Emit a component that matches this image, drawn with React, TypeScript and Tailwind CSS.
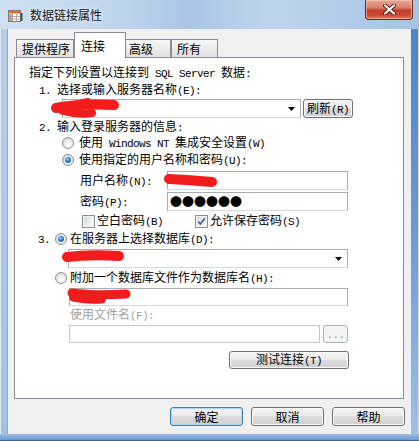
import React from "react";

const CJK = "font-['Noto_Sans_CJK_SC',sans-serif]";
const BTN_GRAD = "bg-[linear-gradient(#f2f2f2_0%,#ebebeb_50%,#dddddd_50%,#cfcfcf_100%)]";

function T({ s }: { s: string }) {
  const parts = s.split(/([\x20-\x7E]+)/).filter((p) => p.length > 0);
  return (
    <>
      {parts.map((p, i) =>
        /^[\x20-\x7E]+$/.test(p) ? (
          <span key={i} className="font-['Liberation_Mono',monospace] text-[11px] tracking-[-0.6px] whitespace-pre">
            {p}
          </span>
        ) : (
          <span key={i}>{p}</span>
        )
      )}
    </>
  );
}

function Radio({ on }: { on?: boolean }) {
  return (
    <span className="shrink-0 w-[12px] h-[12px] rounded-full border border-[#8e8f8f] bg-[radial-gradient(circle_at_60%_65%,#fdfdfd_0%,#e8e8e8_55%,#cdcdcd_100%)] flex items-center justify-center">
      {on && (
        <span className="w-[6px] h-[6px] rounded-full bg-[radial-gradient(circle_at_40%_35%,#9fd3ff_0%,#2d7fd0_45%,#0d3f80_100%)]" />
      )}
    </span>
  );
}

function Check({ on }: { on?: boolean }) {
  return (
    <span className="shrink-0 w-[13px] h-[13px] border border-[#8e8f8f] bg-[linear-gradient(135deg,#cfd2d7_0%,#eef0f2_60%,#ffffff_100%)] shadow-[inset_0_0_0_1px_#f4f4f4] flex items-center justify-center">
      {on && (
        <svg width="9" height="9" viewBox="0 0 9 9">
          <path d="M1.2 4.6 L3.4 7 L7.8 1.4" fill="none" stroke="#4a5f97" strokeWidth="1.7" />
        </svg>
      )}
    </span>
  );
}

function Arrow() {
  return (
    <span className="w-[17px] h-full flex items-center justify-center">
      <svg width="7" height="4" viewBox="0 0 7 4">
        <path d="M0 0 H7 L3.5 4 Z" fill="#000" />
      </svg>
    </span>
  );
}

function Btn({
  cls,
  children,
  def,
}: {
  cls: string;
  children: React.ReactNode;
  def?: boolean;
}) {
  return (
    <div
      className={
        def
          ? `${cls} ${BTN_GRAD} flex items-center justify-center rounded-[3px] border border-[#3c7fb1] shadow-[inset_0_0_0_1px_#a8daf7] leading-[16px]`
          : `${cls} ${BTN_GRAD} flex items-center justify-center rounded-[3px] border border-[#707070] shadow-[inset_0_0_0_1px_#fbfbfb] leading-[16px]`
      }
    >
      {children}
    </div>
  );
}

function Icon() {
  return (
    <svg width="16" height="16" viewBox="0 0 16 16">
      <rect x="1.5" y="2.5" width="12" height="11" fill="#fbfbfb" stroke="#7b7b7b" />
      <rect x="2" y="3" width="11" height="2.5" fill="#e0702c" />
      <rect x="2" y="6" width="3.5" height="7" fill="#f0a060" />
      <path d="M2 8.5 H13 M2 11 H13 M5.5 6 V13 M9.5 6 V13" stroke="#9a9a9a" strokeWidth="0.8" />
      <rect x="13.5" y="5" width="2" height="8" fill="#4a4a4a" />
    </svg>
  );
}

export default function App() {
  return (
    <div
      className={`relative w-[419px] h-[441px] overflow-hidden ${CJK} text-[12px] text-black bg-linear-to-b from-[#c4d9ee] to-[#a7c5e5] flex flex-col`}
    >
      {/* title bar */}
      <div className="h-[29px] shrink-0 flex items-start bg-[linear-gradient(90deg,#cfe0f2_0%,#bcd3ec_30%,#a9c6e6_45%,#bdd4ed_65%,#a5c3e4_100%)]">
        <div className="mt-[8px] ml-[7px] w-[16px] h-[16px]">
          <Icon />
        </div>
        <div className="ml-[7px] mt-[6px] leading-[18px] text-[#1b1b1b] [text-shadow:0_0_6px_#ffffff]">
          数据链接属性
        </div>
        <div className="ml-auto mr-[6px] w-[48px] h-[20px] rounded-b-[4px] border border-t-0 border-[#6a2a1e] bg-[linear-gradient(#e9a898_0%,#d8806c_40%,#c3402a_55%,#c84a34_80%,#e07a60_100%)] shadow-[inset_0_0_0_1px_rgba(255,210,200,0.55)] flex items-center justify-center">
          <svg width="13" height="11" viewBox="0 0 13 11">
            <path d="M2 1.5 L11 9.5 M11 1.5 L2 9.5" stroke="#5a1a10" strokeWidth="4" strokeLinecap="round" />
            <path d="M2 1.5 L11 9.5 M11 1.5 L2 9.5" stroke="#ffffff" strokeWidth="2.2" strokeLinecap="round" />
          </svg>
        </div>
      </div>

      {/* middle row: left frame, client, right frame */}
      <div className="flex h-[405px] shrink-0">
        <div className="w-[8px] bg-linear-to-b from-[#b5cfea] to-[#a2c2e4] border-l border-l-[#dfeaf6] border-r border-r-[#8fa9c8]" />
        <div className="w-[402px] bg-[#f0f0f0] flex flex-col">
          {/* tabs */}
          <div className="h-[28px] shrink-0 flex items-end pl-[8px] relative z-10">
            <div className="w-[58px] h-[18px] border border-b-0 border-[#898c95] bg-[linear-gradient(#f6f6f6,#e1e1e1)] pl-[5px] flex items-center leading-[16px]">
              提供程序
            </div>
            <div className="w-[52px] h-[26px] -mb-px border border-b-0 border-[#898c95] bg-white pl-[6px] pt-[5px] leading-[16px] relative z-10">
              连接
            </div>
            <div className="w-[46px] h-[18px] -ml-px border border-b-0 border-[#898c95] bg-[linear-gradient(#f6f6f6,#e1e1e1)] pl-[3px] flex items-center leading-[16px]">
              高级
            </div>
            <div className="w-[47px] h-[18px] border border-b-0 border-[#898c95] bg-[linear-gradient(#f6f6f6,#e1e1e1)] pl-[5px] flex items-center leading-[16px]">
              所有
            </div>
          </div>

          {/* panel */}
          <div className="mx-[6px] h-[342px] shrink-0 border border-[#898c95] bg-white flex flex-col pt-[7px] whitespace-nowrap">
            <div className="h-[16px] pl-[14px] flex items-center">
              <span><T s="指定下列设置以连接到 SQL Server 数据:" /></span>
            </div>
            <div className="h-[18px] pl-[24px] flex items-center">
              <span><T s="1. 选择或输入服务器名称(E):" /></span>
            </div>
            <div className="h-[19px] pl-[47px] flex">
              <div className="w-[239px] h-full border border-[#abadb3] border-b-[#d5d9de] bg-white flex justify-end">
                <Arrow />
              </div>
              <Btn cls="ml-[2px] w-[50px] h-full">
                <span><T s="刷新(R)" /></span>
              </Btn>
            </div>
            <div className="mt-[1px] h-[16px] pl-[24px] flex items-center">
              <span><T s="2. 输入登录服务器的信息:" /></span>
            </div>
            <div className="h-[16px] pl-[47px] flex items-center">
              <Radio />
              <span className="ml-[5px]"><T s="使用 Windows NT 集成安全设置(W)" /></span>
            </div>
            <div className="h-[18px] pl-[47px] flex items-center">
              <Radio on />
              <span className="ml-[5px]"><T s="使用指定的用户名称和密码(U):" /></span>
            </div>
            <div className="mt-[2px] h-[19px] pl-[65px] flex items-center">
              <span className="w-[87px]"><T s="用户名称(N):" /></span>
              <div className="w-[181px] h-full border border-[#abadb3] border-b-[#d5d9de] bg-white" />
            </div>
            <div className="mt-[2px] h-[19px] pl-[65px] flex items-center">
              <span className="w-[87px]"><T s="密码(P):" /></span>
              <div className="w-[181px] h-full border border-[#abadb3] border-b-[#d5d9de] bg-white flex items-center pl-[2px] text-[12px] leading-[12px]">
                ●●●●●●
              </div>
            </div>
            <div className="mt-[1px] h-[18px] pl-[67px] flex items-center">
              <div className="w-[113px] flex items-center">
                <Check />
                <span className="ml-[2px]"><T s="空白密码(B)" /></span>
              </div>
              <Check on />
              <span className="ml-[2px]"><T s="允许保存密码(S)" /></span>
            </div>
            <div className="h-[18px] pl-[23px] flex items-center">
              <span><T s="3." /></span>
              <span className="ml-[5px] flex"><Radio on /></span>
              <span className="ml-[3px]"><T s="在服务器上选择数据库(D):" /></span>
            </div>
            <div className="mt-[1px] h-[19px] pl-[53px] flex">
              <div className="w-[280px] h-full border border-[#abadb3] border-b-[#d5d9de] bg-white flex justify-end">
                <Arrow />
              </div>
            </div>
            <div className="mt-[1px] h-[18px] pl-[40px] flex items-center">
              <Radio />
              <span className="ml-[3px]"><T s="附加一个数据库文件作为数据库名(H):" /></span>
            </div>
            <div className="mt-[1px] h-[18px] pl-[54px] flex">
              <div className="w-[279px] h-full border border-[#abadb3] border-b-[#d5d9de] bg-white" />
            </div>
            <div className="h-[18px] pl-[55px] flex items-center text-[#a0a0a0]">
              <span><T s="使用文件名(F):" /></span>
            </div>
            <div className="mt-[1px] h-[18px] pl-[54px] flex">
              <div className="w-[251px] h-full border border-[#c3c6cb] bg-white" />
              <div className="ml-[3px] w-[25px] h-full rounded-[3px] border border-[#adb2b5] bg-[#f4f4f4] flex items-center justify-center text-[#a0a0a0]">
                <span><T s="..." /></span>
              </div>
            </div>
            <div className="mt-[8px] h-[18px] pl-[214px] flex">
              <Btn cls="w-[120px] h-full">
                <span><T s="测试连接(T)" /></span>
              </Btn>
            </div>
          </div>

          {/* dialog buttons */}
          <div className="mt-[8px] h-[19px] shrink-0 flex justify-end gap-[8px] pr-[5px]">
            <Btn cls="w-[73px] h-full" def>
              确定
            </Btn>
            <Btn cls="w-[73px] h-full">取消</Btn>
            <Btn cls="w-[73px] h-full">帮助</Btn>
          </div>
        </div>
        <div className="w-[9px] bg-linear-to-b from-[#4f84c6] via-[#6a9bd4] to-[#9dc0e7] border-l border-l-[#e4ecf5] border-r border-r-[#cadcf0]" />
      </div>

      {/* bottom frame */}
      <div className="flex-1 bg-linear-to-b from-[#9cbfe6] to-[#6a98d0] border-b border-b-[#3e6498]" />

      {/* red scribbles drawn over the image */}
      <svg className="absolute inset-0 pointer-events-none" width="419" height="441" viewBox="0 0 419 441">
        <g fill="none" stroke="#f21c1c" strokeLinecap="round" strokeLinejoin="round">
          <path d="M56 108 Q80 103 114 105" strokeWidth="10" />
          <path d="M63 111 Q78 115 92 113" strokeWidth="8" />
          <path d="M76 103 L88 100.5" strokeWidth="5" />
          <path d="M169 179 Q190 180 212 182" strokeWidth="10" />
          <path d="M67 257 Q90 254 119 256" strokeWidth="10" />
          <path d="M72 293 Q95 296 126 294" strokeWidth="9" />
          <path d="M73 298 Q88 301 102 300" strokeWidth="7" />
        </g>
      </svg>
    </div>
  );
}
